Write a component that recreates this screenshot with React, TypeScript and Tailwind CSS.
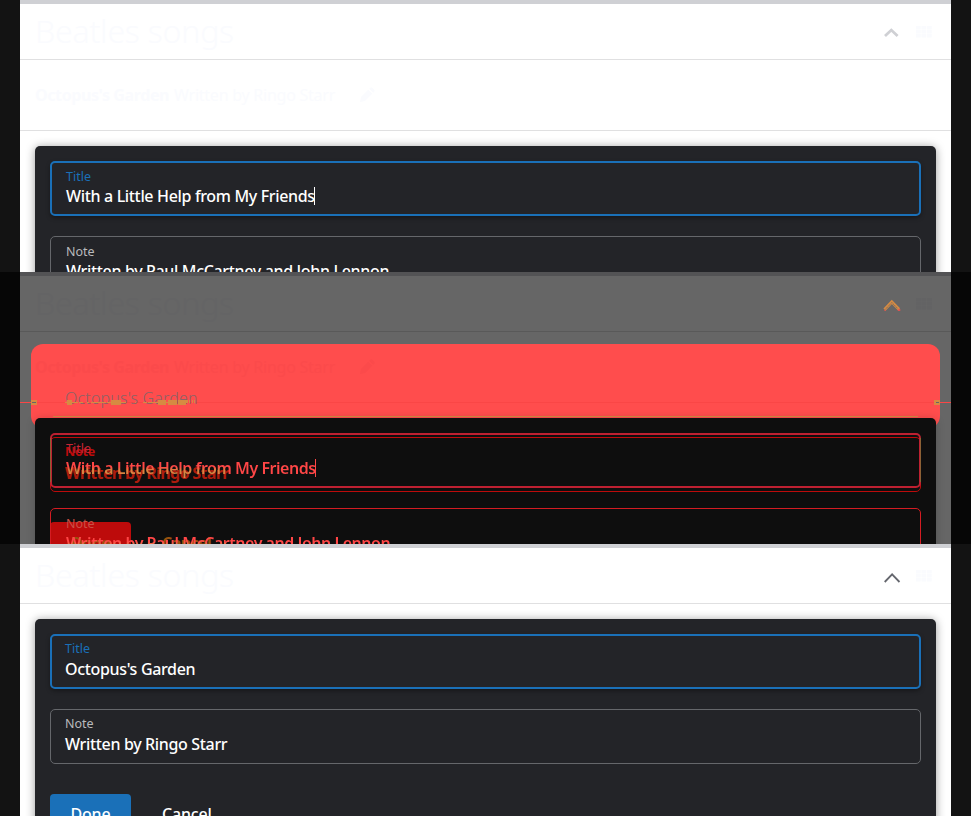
import React from "react";

type FieldProps = {
  label: string;
  value: string;
  focused?: boolean;
  caret?: boolean;
  diff?: boolean;
  shifted?: boolean;
};

function Field({ label, value, focused, caret, diff, shifted }: FieldProps) {
  const frame = focused
    ? diff
      ? "border-2 border-[#be2031] px-[14px]"
      : "border-2 border-[#1a70b8] px-[14px] shadow-[0_2px_4px_rgba(0,0,0,0.35)]"
    : diff
      ? "border border-[#d41c22] px-[15px]"
      : "border border-[#65676b] px-[15px]";
  const top = focused ? (shifted ? "pt-1" : "pt-[5px]") : shifted ? "pt-[5px]" : "pt-[6px]";
  const labelColor = diff ? (focused ? "text-[#c92534]" : "text-[#c95045]") : focused ? "text-[#1a70b8]" : "text-[#b9babc]";
  const valueColor = diff
    ? "bg-[linear-gradient(#ff4646,#ff4646_45%,#d98442_60%)] bg-[#ff4646] bg-[length:162px_100%] bg-no-repeat bg-clip-text font-semibold tracking-[-0.48px] text-transparent"
    : "font-medium tracking-[-0.34px] text-white";
  return (
    <div className={`h-[55px] shrink-0 rounded-[5px] ${frame} ${top} ${shifted ? "-indent-px" : ""}`}>
      <div className={`text-[12.5px] ${shifted ? "h-[18px]" : "h-[17px]"} leading-[18px] ${labelColor}`}>{label}</div>
      <div className="flex h-[22px] items-center whitespace-nowrap text-base leading-[22px]">
        <span className={valueColor}>{value}</span>
        {caret && <span className={`-ml-px h-[18px] w-px ${diff ? "bg-[#ff4646]" : "bg-white"}`} />}
      </div>
    </div>
  );
}

function Header({ mode }: { mode: "before" | "diff" | "after" }) {
  const diff = mode === "diff";
  return (
    <div className={`flex h-[60px] shrink-0 items-center border-b border-t-4 pl-[15px] pr-[19px] ${diff ? "border-b-[#595959] border-t-[#535355]" : "border-b-[#e0e0e1] border-t-[#cfd0d4]"}`}>
      <h1 className={`-mt-px text-[32px] font-light leading-10 tracking-[-0.2px] ${diff ? "text-[#646465]" : "text-[#fafbfe]"}`}>Beatles songs</h1>
      <div className="ml-auto flex items-center gap-[15px]">
        {mode === "before" && (
          <svg width="18" height="14" viewBox="0 0 18 14" fill="none">
            <path d="M2.7 10.7 9 4.8l6.3 5.9" transform="translate(-.7 .3)" stroke="#cfd0d4" strokeWidth="2.8" />
          </svg>
        )}
        {diff && (
          <svg width="18" height="14" viewBox="0 0 18 14" fill="none">
            <path d="M1.5 12.6 8.8 5l7.2 7.2" stroke="#d68b42" strokeWidth="3" />
            <path d="M2.2 12.5 8.8 5.6l6 6" stroke="#666" strokeWidth=".9" strokeDasharray="1.5 .7" />
            <path d="M14.8 13h2.5M1.5 13.5h1" stroke="#ff4d4d" strokeWidth="1.6" />
          </svg>
        )}
        {mode === "after" && (
          <svg width="18" height="14" viewBox="0 0 18 14" fill="none">
            <path d="M1.7 13 9.1 5.4l7.4 7.6" stroke="#65676e" strokeWidth="1.8" />
          </svg>
        )}
        <svg width="16" height="12" viewBox="0 0 16 12" className={diff ? "fill-[#636364]" : "fill-[#fafbfe]"}>
          {[0, 5.5, 11].map((x) =>
            [0, 4, 8].map((y) => <rect key={`${x}-${y}`} x={x} y={y} width="4.7" height="3.5" />)
          )}
        </svg>
      </div>
    </div>
  );
}

function ListRow({ diff }: { diff?: boolean }) {
  return (
    <div className={`flex h-[71px] shrink-0 items-center border-b px-[15px] text-base ${diff ? "border-transparent text-[#fb4a4b]" : "border-[#e0e0e1] text-[#fafbfe]"}`}>
      <span className="mr-[5px] font-bold tracking-[-0.4px]">Octopus's Garden</span>
      <span className="tracking-[-0.24px]">Written by Ringo Starr</span>
      <svg width="16" height="16" viewBox="0 0 16 16" className="ml-6 fill-current">
        <path d="m1 15 1-5 7.2-7.2 4 4L6 14l-5 1ZM10.2 1.8l1-1a1.5 1.5 0 0 1 2 0l2 2a1.5 1.5 0 0 1 0 2l-1 1-4-4Z" />
      </svg>
    </div>
  );
}

function Before() {
  return (
    <section className="h-[272px] overflow-hidden bg-[#131313] px-5">
      <div className="flex h-full flex-col bg-white">
        <Header mode="before" />
        <ListRow />
        <div className="mx-[15px] mt-[15px] flex h-[250px] shrink-0 flex-col gap-5 rounded-[5px] bg-[#232428] p-[15px] shadow-[0_1px_10px_rgba(0,0,0,0.4)]">
          <Field label="Title" value="With a Little Help from My Friends" focused caret />
          <Field label="Note" value="Written by Paul McCartney and John Lennon" />
        </div>
      </div>
    </section>
  );
}

const fringe = [
  [45, 2], [52, 6], [59, 4], [67, 2], [71, 15], [87, 4], [101, 4], [105, 1], [115, 1], [123, 4], [128, 10], [146, 2],
];
const fringeBlocks = [[47, 5], [91, 10], [138, 8], [148, 9], [158, 8]];
const fringeTicks = [[166, 2], [169, 1], [172, 1], [174, 1]];

function Diff() {
  return (
    <section className="h-[272px] overflow-hidden bg-[#060606] px-5">
      <div className="relative isolate flex h-full flex-col bg-[#666]">
        <div className="absolute left-[11px] top-[72px] -z-10 h-[84px] w-[909px] rounded-[12px] bg-[#ff4d4d]" />
        <Header mode="diff" />
        <ListRow diff />
        <div className="absolute left-0 top-[130px] h-px w-full bg-[#fa4646]" />
        <div className="absolute left-[45px] top-[115px] text-base font-light leading-[22px] tracking-[0.18px] text-[#8c6266]">Octopus's Garden</div>
        {fringe.map(([x, w]) => (
          <i key={x} className="absolute top-[130px] h-px bg-[#d68b42]" style={{ left: x, width: w }} />
        ))}
        {fringeBlocks.map(([x, w]) => (
          <i key={x} className="absolute top-[128px] h-[5px] bg-[#d68b42]" style={{ left: x, width: w }} />
        ))}
        {fringeTicks.map(([x, w]) => (
          <i key={x} className="absolute top-[128px] h-[3px] bg-[#d68b42]" style={{ left: x, width: w }} />
        ))}
        <div className="absolute left-[11px] top-[128px] flex h-[5px] w-[6px] items-center bg-[#d68b42]"><i className="ml-px h-px w-1 bg-[#666]" /></div>
        <div className="absolute left-[914px] top-[128px] flex h-[5px] w-[6px] items-center bg-[#d68b42]"><i className="ml-0.5 h-px w-[3px] bg-[#666]" /></div>
        <div className="absolute left-[33px] top-[144px] h-px w-[865px] bg-[#d68b42]" />
        <div className="relative mx-[15px] mt-[15px] flex h-[250px] shrink-0 flex-col gap-5 rounded-[5px] bg-[#0e0e0e] p-[15px] shadow-[0_1px_10px_rgba(0,0,0,0.2)]">
          <div className="absolute left-[15px] top-[19px] h-[55px] w-[871px] rounded-[5px] border border-[#bd0b0b] px-[14px] pt-[5px]">
            <div className="h-[18px] text-[12.5px] font-bold leading-[18px] tracking-[-0.2px] text-[#bd0b0b]">Note</div>
            <div className="mt-px text-base font-bold leading-[22px] tracking-[-0.65px] text-[#ad1c0d]">Written by Ringo Starr</div>
          </div>
          <div className="absolute left-[15px] top-[104px] h-12 w-[81px] rounded-[4px] bg-[#bd0b0b]" />
          <div className="absolute left-[36px] top-[114px] flex gap-[52px] text-base font-bold leading-[22px] tracking-[-0.65px] text-[#98520e]"><span>Done</span><span>Cancel</span></div>
          <div className="relative">
            <Field label="Title" value="With a Little Help from My Friends" focused caret diff />
            <i className="absolute left-0 top-[5px] h-[44px] w-px bg-[#8c6035]" />
            <i className="absolute right-0 top-[5px] h-[44px] w-px bg-[#8c6035]" />
          </div>
          <div className="relative"><Field label="Note" value="Written by Paul McCartney and John Lennon" diff /></div>
        </div>
      </div>
    </section>
  );
}

function After() {
  return (
    <section className="h-[272px] overflow-hidden bg-[#131313] px-5">
      <div className="flex h-full flex-col bg-white">
        <Header mode="after" />
        <div className="mx-[15px] mt-[15px] flex h-[280px] shrink-0 flex-col rounded-[5px] bg-[#232428] p-[15px] shadow-[0_1px_10px_rgba(0,0,0,0.4)]">
          <Field label="Title" value="Octopus's Garden" focused shifted />
          <div className="h-5 shrink-0" />
          <Field label="Note" value="Written by Ringo Starr" shifted />
          <div className="mt-[30px] flex text-base font-medium tracking-[-0.2px] text-white">
            <button className="h-10 w-[81px] rounded-[4px] bg-[#1a70b8]">Done</button>
            <button className="ml-[31px] h-10">Cancel</button>
          </div>
        </div>
      </div>
    </section>
  );
}

export default function App() {
  return (
    <main className="h-[816px] w-[971px] overflow-hidden font-['Noto_Sans',sans-serif]">
      <Before />
      <Diff />
      <After />
    </main>
  );
}
